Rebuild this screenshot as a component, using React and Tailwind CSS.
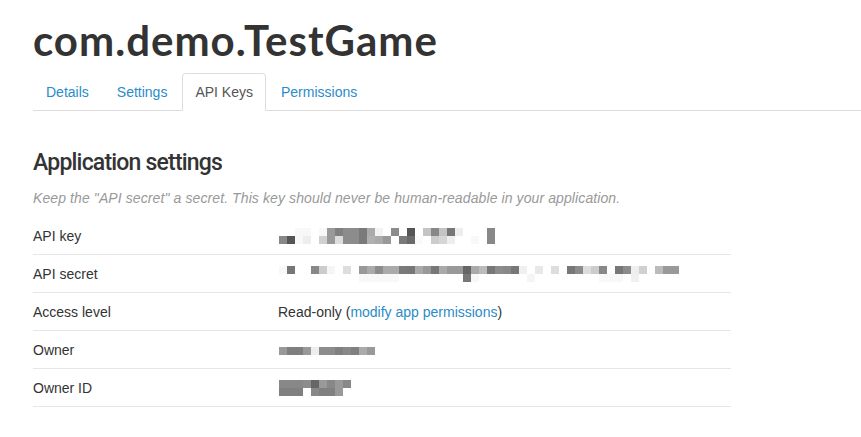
import React from "react";

const tabs = ["Details", "Settings", "API Keys", "Permissions"];

const W = "#ffffff";
const F = "#f8f8f8";

// pixelated (obscured) values, 8px blocks, rows of colours
const apiKey = [
  [W, W, F, F, W, F, "#999", "#808080", "#8c8c8c", "#8c8c8c", "#7a7a7a", "#aaa", "#f3f3f3", W, "#8c8c8c", W, "#555", W, "#c4c4c4", "#888", "#c4c4c4", "#777", "#eee", W, W, W, "#888"],
  ["#888", "#555", F, "#eee", W, "#d0d0d0", "#999", "#ddd", "#8c8c8c", "#8c8c8c", "#7a7a7a", "#b0b0b0", "#aaa", "#999", W, "#7a7a7a", "#6a6a6a", "#fafafa", W, "#ccc", "#d6d6d6", "#eee", W, W, F, W, "#888"],
];

const apiSecret = [
  [F, "#777", W, W, "#888", "#ccc", "#f5f5f5", W, "#ddd", W, "#999", "#aaa", "#8c8c8c", "#aaa", "#aaa", "#7a7a7a", "#777", "#aaa", "#999", "#777", "#aaa", "#999", "#999", "#666", "#aaa", "#bbb", "#777", "#8c8c8c", "#888", "#777", "#f0f0f0", W, "#e8e8e8", W, "#ddd", W, "#777", "#8c8c8c", "#ddd", "#ccc", "#888", W, "#777", "#8c8c8c", "#eee", "#d0d0d0", W, "#bbb", "#999", "#999"],
  [W, W, W, W, W, W, W, W, W, W, F, F, F, F, F, W, W, W, W, W, W, W, W, "#777", F, W, W, W, W, W, W, "#f5f5f5", W, W, W, W, W, W, W, W, F, F, F, W, "#f0f0f0", W, W, W, W, W],
];

const owner = [
  ["#999", "#7f7f7f", "#7f7f7f", "#999", "#eee", "#8c8c8c", "#8c8c8c", "#808080", "#888", "#808080", "#aaa", "#999"],
];

const ownerId = [
  ["#888", "#888", "#888", "#8c8c8c", "#666", "#999", "#888", "#999", "#888"],
  ["#808080", "#808080", "#808080", W, "#888", "#808080", "#808080", "#999", W],
];

function Pixels({ rows, className = "" }) {
  return (
    <div className={`flex flex-col ${className}`}>
      {rows.map((row, r) => (
        <div key={r} className="flex">
          {row.map((c, i) => (
            <div key={i} className="w-2 h-2" style={{ backgroundColor: c }} />
          ))}
        </div>
      ))}
    </div>
  );
}

function Row({ label, children }) {
  return (
    <div className="flex items-center h-[38px] border-b border-[#e6e6e6]">
      <div className="w-[245px] shrink-0">{label}</div>
      <div className="flex-1">{children}</div>
    </div>
  );
}

export default function App() {
  return (
    <div className="w-[861px] h-[437px] overflow-hidden bg-white text-[#333] font-['Liberation_Sans',Arial,sans-serif] text-[14px] leading-5">
      <div className="pl-[33px]">
        <h1 className="pt-[16px] font-['Lato',sans-serif] font-bold text-[42px] leading-[48px] tracking-[1px] text-[#333]">
          com.demo.TestGame
        </h1>

        <ul className="mt-[9px] flex border-b border-[#ddd]">
          {tabs.map((t) => {
            const active = t === "API Keys";
            return (
              <li key={t} className="-mb-px mr-[2px]">
                <a
                  className={
                    active
                      ? "block px-3 py-2 leading-5 border border-[#ddd] border-b-white rounded-t-[4px] bg-white text-[#555]"
                      : "block px-3 py-2 leading-5 border border-transparent text-[#2a8cc8]"
                  }
                >
                  {t}
                </a>
              </li>
            );
          })}
        </ul>

        <div className="w-[698px]">
          <h3 className="mt-[38px] font-['Roboto',sans-serif] font-medium text-[23px] leading-7 tracking-[-0.8px] text-[#333]">
            Application settings
          </h3>
          <p className="mt-[11px] italic text-[14px] leading-5 tracking-[0.1px] text-[#999]">
            Keep the "API secret" a secret. This key should never be human-readable in your application.
          </p>

          <div className="mt-[9px]">
            <Row label="API key">
              <Pixels rows={apiKey} className="ml-px" />
            </Row>
            <Row label="API secret">
              <Pixels rows={apiSecret} className="ml-px" />
            </Row>
            <Row label="Access level">
              Read-only (<a className="text-[#2a8cc8]">modify app permissions</a>)
            </Row>
            <Row label="Owner">
              <Pixels rows={owner} className="ml-px mt-[3px]" />
            </Row>
            <Row label="Owner ID">
              <Pixels rows={ownerId} className="ml-px" />
            </Row>
          </div>
        </div>
      </div>
    </div>
  );
}
